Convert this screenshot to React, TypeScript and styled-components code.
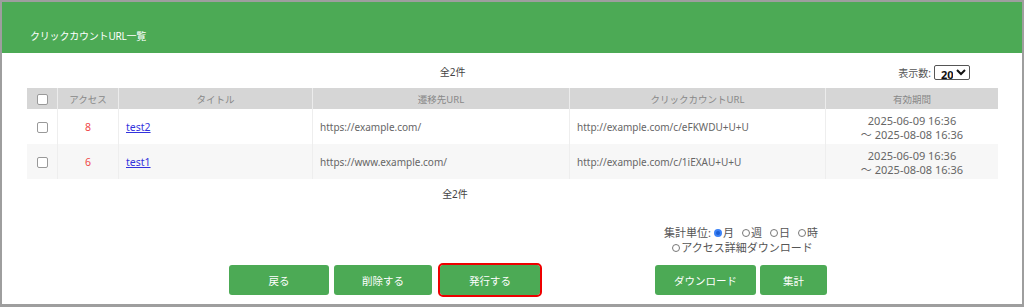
import React, { useState } from 'react'
import styled, { createGlobalStyle } from 'styled-components'

const GlobalStyle = createGlobalStyle`
    html, body {
        margin: 0;
        padding: 0;
        background: #fff;
    }
    body {
        font-family: "Noto Sans", "Noto Sans CJK JP", sans-serif;
    }
`

const Frame = styled.div`
    box-sizing: border-box;
    width: 1024px;
    height: 307px;
    border-style: solid;
    border-color: #9e9e9e;
    border-width: 2px 2px 3px 2px;
    background: #fff;
    overflow: hidden;
`

const Header = styled.div`
    height: 51px;
    background: #4caa55;
    box-sizing: border-box;
    padding: 26px 0 0 28px;
`

const HeaderTitle = styled.h1`
    margin: 0;
    color: #fff;
    font-size: 10px;
    font-weight: 400;
    line-height: 16px;
    letter-spacing: -0.2px;
`

const Content = styled.div`
    padding: 0 24px 0 25px;
`

const Toolbar = styled.div`
    display: flex;
    align-items: center;
    height: 20px;
    margin-top: 9px;
`

const Count = styled.div`
    flex: 1;
    text-align: center;
    padding-right: 20px;
    color: #444;
    font-size: 10px;
    line-height: 20px;
`

const PerPage = styled.label`
    display: flex;
    align-items: center;
    gap: 3px;
    padding-right: 28px;
    color: #555;
    font-size: 10px;
`

const Select = styled.select`
    width: 36px;
    height: 15px;
    padding: 0 0 0 2px;
    font-size: 11px;
    font-weight: 700;
    font-family: "Noto Sans", sans-serif;
    color: #111;
    border: 1px solid #555;
    border-radius: 2px;
    background: #fff;
`

const Table = styled.table`
    width: 971px;
    margin-top: 6px;
    border-collapse: collapse;
    table-layout: fixed;
`

const Th = styled.th<{ $w: number }>`
    width: ${p => p.$w}px;
    height: 21px;
    padding: 0;
    background: #d6d6d6;
    border-left: 1px solid #ececec;
    color: #888;
    font-size: 9.5px;
    font-weight: 400;
    text-align: center;
    &:first-child { border-left: none; }
`

const Tr = styled.tr<{ $striped?: boolean }>`
    background: ${p => (p.$striped ? '#f7f7f7' : '#fff')};
`

const Td = styled.td<{ $align?: string; $color?: string }>`
    height: 35px;
    padding: 0 7px;
    border-left: 1px solid #eeeeee;
    text-align: ${p => p.$align || 'left'};
    color: ${p => p.$color || '#666'};
    font-size: 10px;
    &:first-child { border-left: none; }
`

const Period = styled.div`
    font-size: 11px;
    line-height: 14px;
    color: #666;
    padding-top: 2px;
`

const Box = styled.input`
    appearance: none;
    width: 11px;
    height: 11px;
    margin: 0;
    border: 1px solid #999;
    border-radius: 2px;
    background: #fff;
    vertical-align: middle;
`

const Access = styled.span`
    color: #f04848;
    font-size: 10.5px;
`

const TitleLink = styled.a`
    color: #3333dd;
    text-decoration: underline;
    font-size: 10.5px;
`

const BottomCount = styled(Count)`
    margin-top: 5px;
    padding-right: 115px;
`

const Footer = styled.div`
    display: flex;
    align-items: flex-end;
    padding-left: 227px;
    margin-top: 21px;
`

const ButtonGroup = styled.div`
    display: flex;
    gap: 5px;
`

const RightBlock = styled.div`
    display: flex;
    flex-direction: column;
    align-items: center;
    margin-left: 115px;
`

const Options = styled.div`
    display: flex;
    flex-direction: column;
    align-items: center;
    color: #555;
    font-size: 11px;
    line-height: 15px;
    margin-bottom: 10px;
`

const OptionRow = styled.div`
    display: flex;
    align-items: center;
`

const RadioLabel = styled.label`
    display: flex;
    align-items: center;
    margin-left: 8px;
    &:first-child { margin-left: 3px; }
`

const RadioDot = styled.span<{ $on?: boolean }>`
    box-sizing: border-box;
    width: 8px;
    height: 8px;
    border-radius: 50%;
    margin-right: 1px;
    border: ${p => (p.$on ? '2px solid #3b82f6' : '1px solid #777')};
    background: ${p => (p.$on ? '#1a5fd6' : '#fff')};
`

const Button = styled.button<{ $w: number; $active?: boolean }>`
    width: ${p => p.$w}px;
    height: 30px;
    border: none;
    border-radius: 3px;
    background: #4caa55;
    color: #fff;
    font-family: "Noto Sans", "Noto Sans CJK JP", sans-serif;
    font-size: 10.5px;
    cursor: pointer;
    outline: ${p => (p.$active ? '2px solid #ee0000' : 'none')};
    margin-left: ${p => (p.$active ? '3px' : '0')};
`

const RightButtons = styled.div`
    display: flex;
    gap: 4px;
`

const rows = [
    { access: 8, title: 'test2', dest: 'https://example.com/', click: 'http://example.com/c/eFKWDU+U+U' },
    { access: 6, title: 'test1', dest: 'https://www.example.com/', click: 'http://example.com/c/1iEXAU+U+U' },
]

const units = ['月', '週', '日', '時']

const App: React.FC = () => {
    const [unit] = useState('月')

    return (
        <>
            <GlobalStyle />
            <Frame>
                <Header>
                    <HeaderTitle>クリックカウントURL一覧</HeaderTitle>
                </Header>
                <Content>
                    <Toolbar>
                        <Count>全2件</Count>
                        <PerPage>
                            表示数:
                            <Select defaultValue='20'>
                                <option value='20'>20</option>
                                <option value='50'>50</option>
                            </Select>
                        </PerPage>
                    </Toolbar>
                    <Table>
                        <thead>
                            <tr>
                                <Th $w={30}><Box type='checkbox' /></Th>
                                <Th $w={60}>アクセス</Th>
                                <Th $w={193}>タイトル</Th>
                                <Th $w={256}>遷移先URL</Th>
                                <Th $w={255}>クリックカウントURL</Th>
                                <Th $w={172}>有効期間</Th>
                            </tr>
                        </thead>
                        <tbody>
                            {rows.map((r, i) => (
                                <Tr key={r.title} $striped={i % 2 === 1}>
                                    <Td $align='center'><Box type='checkbox' /></Td>
                                    <Td $align='center'><Access>{r.access}</Access></Td>
                                    <Td><TitleLink href='#'>{r.title}</TitleLink></Td>
                                    <Td>{r.dest}</Td>
                                    <Td>{r.click}</Td>
                                    <Td $align='center'>
                                        <Period>
                                            2025-06-09 16:36<br />～ 2025-08-08 16:36
                                        </Period>
                                    </Td>
                                </Tr>
                            ))}
                        </tbody>
                    </Table>
                    <BottomCount>全2件</BottomCount>
                </Content>
                <Footer>
                    <ButtonGroup>
                        <Button $w={100}>戻る</Button>
                        <Button $w={98}>削除する</Button>
                        <Button $w={100} $active>発行する</Button>
                    </ButtonGroup>
                    <RightBlock>
                        <Options>
                            <OptionRow>
                                集計単位:
                                {units.map(u => (
                                    <RadioLabel key={u}>
                                        <RadioDot $on={u === unit} />
                                        {u}
                                    </RadioLabel>
                                ))}
                            </OptionRow>
                            <OptionRow>
                                <RadioLabel>
                                    <RadioDot />
                                    アクセス詳細ダウンロード
                                </RadioLabel>
                            </OptionRow>
                        </Options>
                        <RightButtons>
                            <Button $w={101}>ダウンロード</Button>
                            <Button $w={67}>集計</Button>
                        </RightButtons>
                    </RightBlock>
                </Footer>
            </Frame>
        </>
    )
}

export default App
